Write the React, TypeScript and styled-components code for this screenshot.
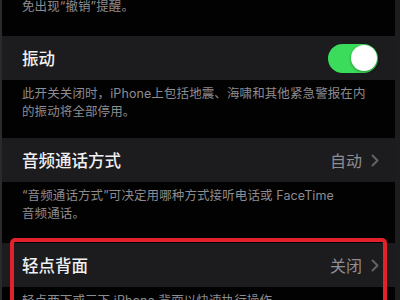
import React from "react";
import styled, { createGlobalStyle } from "styled-components";

const Global = createGlobalStyle`
  html, body {
    margin: 0;
    padding: 0;
    background: #000;
  }
  body {
    width: 400px;
    height: 300px;
    overflow: hidden;
    font-family: "Inter", "Noto Sans CJK SC", sans-serif;
  }
`;

const Screen = styled.div`
  box-sizing: border-box;
  width: 400px;
  height: 300px;
  overflow: hidden;
  background: #020202;
  border-left: 2px solid #2a2a2c;
  border-right: 5px solid #1d1d1f;
  display: flex;
  flex-direction: column;
`;

const Footer = styled.p<{ $top?: number }>`
  margin: ${(p) => p.$top ?? 5}px 0 0 0;
  padding: 0 20px;
  font-size: 12.5px;
  line-height: 17.5px;
  color: #8c8c91;
  letter-spacing: 0.1px;
`;

const Row = styled.div<{ $gap: number }>`
  box-sizing: border-box;
  margin-top: ${(p) => p.$gap}px;
  height: 44px;
  flex: 0 0 44px;
  background: #1c1b1e;
  display: flex;
  align-items: center;
  justify-content: space-between;
  padding: 0 16px 0 20px;
`;

const Title = styled.span`
  font-size: 16.5px;
  font-weight: 500;
  color: #f0f0f2;
`;

const Value = styled.span`
  display: flex;
  align-items: center;
  gap: 9px;
  font-size: 16px;
  color: #8e8e93;
`;

const Switch = styled.div<{ $on: boolean }>`
  position: relative;
  width: 50px;
  height: 29px;
  border-radius: 15px;
  background: ${(p) => (p.$on ? "#3bdc5b" : "#3a3a3c")};
  margin-right: 1px;
`;

const Knob = styled.div<{ $on: boolean }>`
  position: absolute;
  top: 1.5px;
  ${(p) => (p.$on ? "right: 1.5px;" : "left: 1.5px;")}
  width: 26px;
  height: 26px;
  border-radius: 50%;
  background: #ffffff;
  box-shadow: 0 1px 3px rgba(0, 0, 0, 0.35);
`;

const Highlighted = styled.div<{ $gap: number }>`
  position: relative;
  margin-top: ${(p) => p.$gap}px;
  display: flex;
  flex-direction: column;
`;

const RedFrame = styled.div`
  position: absolute;
  top: -5px;
  left: 8px;
  right: 8px;
  bottom: -60px;
  border: 4px solid #e3212b;
  border-radius: 5px;
  pointer-events: none;
`;

const Chevron = () => (
  <svg width="8" height="13" viewBox="0 0 8 13" fill="none">
    <polyline
      points="1.5,1.5 6.5,6.5 1.5,11.5"
      stroke="#626267"
      strokeWidth="2"
      strokeLinecap="round"
      strokeLinejoin="round"
    />
  </svg>
);

export default function App() {
  return (
    <>
      <Global />
      <Screen>
        <Footer $top={-2}>免出现“撤销”提醒。</Footer>
        <Row $gap={20.5}>
          <Title>振动</Title>
          <Switch $on>
            <Knob $on />
          </Switch>
        </Row>
        <Footer>
          此开关关闭时，iPhone上包括地震、海啸和其他紧急警报在内
          <br />
          的振动将全部停用。
        </Footer>
        <Row $gap={18}>
          <Title>音频通话方式</Title>
          <Value>
            自动
            <Chevron />
          </Value>
        </Row>
        <Footer>
          “音频通话方式”可决定用哪种方式接听电话或 FaceTime
          <br />
          音频通话。
        </Footer>
        <Highlighted $gap={21}>
          <Row $gap={0}>
            <Title>轻点背面</Title>
            <Value>
              关闭
              <Chevron />
            </Value>
          </Row>
          <Footer>轻点两下或三下 iPhone 背面以快速执行操作。</Footer>
          <RedFrame />
        </Highlighted>
      </Screen>
    </>
  );
}
